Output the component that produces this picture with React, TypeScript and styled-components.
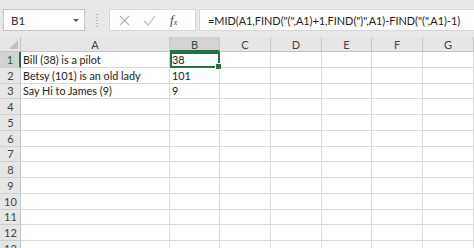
import { createGlobalStyle } from "styled-components";
import styled from "styled-components";

const GlobalStyle = createGlobalStyle`
  html, body {
    margin: 0;
    padding: 0;
    width: 474px;
    height: 248px;
    overflow: hidden;
    background: #ffffff;
  }
  body {
    font-family: Lato, "Open Sans", "Liberation Sans", sans-serif;
  }
`;

const Window = styled.div`
  width: 474px;
  height: 248px;
  overflow: hidden;
  background: #e8e8e8;
`;

const FormulaBar = styled.div`
  height: 37px;
  padding: 9px 0 0 3px;
  box-sizing: border-box;
  display: flex;
  align-items: flex-start;
`;

const NameBox = styled.div`
  width: 82px;
  height: 22px;
  box-sizing: border-box;
  background: #fff;
  border: 1px solid #c6c6c6;
  display: flex;
  align-items: center;
  justify-content: space-between;
  padding: 0 5px 0 7px;
  font-size: 11.5px;
  color: #333;
`;

const Caret = styled.span`
  width: 0;
  height: 0;
  border-left: 3px solid transparent;
  border-right: 3px solid transparent;
  border-top: 3px solid #555;
  margin-top: 1px;
`;

const Grip = styled.div`
  width: 2px;
  height: 14px;
  margin: 4px 11px 0 11px;
  background-image: radial-gradient(circle, #b8b8b8 0.8px, transparent 1px);
  background-size: 2px 3px;
`;

const ButtonBox = styled.div`
  width: 87px;
  height: 22px;
  box-sizing: border-box;
  background: #fff;
  border: 1px solid #d6d6d6;
  display: flex;
  align-items: center;
  padding-left: 9px;
  gap: 13px;
`;

const Fx = styled.span`
  font-family: "Liberation Serif", serif;
  font-style: italic;
  font-size: 13px;
  color: #444;
  margin-left: 1px;
  sub {
    font-size: 8px;
    vertical-align: -1px;
  }
`;

const FormulaInput = styled.div`
  flex: 1;
  height: 22px;
  margin-left: 3px;
  box-sizing: border-box;
  background: #fff;
  border: 1px solid #d6d6d6;
  border-right: none;
  display: flex;
  align-items: center;
  padding-left: 8px;
  font-size: 10.9px;
  color: #222;
  white-space: nowrap;
  overflow: hidden;
`;

const Sheet = styled.div`
  display: grid;
  grid-template-columns: 21px 149px 50px 51px 51px 50px 51px 51px;
  grid-template-rows: 15px repeat(13, 15.75px);
  background: #fff;
`;

const Corner = styled.div`
  background: #e6e6e6;
  border-right: 1px solid #c4c4c4;
  border-bottom: 1px solid #c4c4c4;
  box-sizing: border-box;
  position: relative;
  &::after {
    content: "";
    position: absolute;
    right: 2px;
    bottom: 2px;
    width: 0;
    height: 0;
    border-left: 9px solid transparent;
    border-bottom: 9px solid #c2c2c2;
  }
`;

const ColHeader = styled.div<{ $active?: boolean }>`
  background: ${({ $active }) => ($active ? "#d3d3d3" : "#e6e6e6")};
  border-right: 1px solid #c8c8c8;
  border-bottom: ${({ $active }) => ($active ? "2px solid #217346" : "1px solid #c4c4c4")};
  box-sizing: border-box;
  display: flex;
  align-items: center;
  justify-content: center;
  font-size: 11px;
  color: ${({ $active }) => ($active ? "#1e5a38" : "#444")};
  padding-top: ${({ $active }) => ($active ? "1px" : "0")};
`;

const RowHeader = styled.div<{ $active?: boolean }>`
  background: ${({ $active }) => ($active ? "#d3d3d3" : "#e6e6e6")};
  border-right: ${({ $active }) => ($active ? "2px solid #217346" : "1px solid #c4c4c4")};
  border-bottom: 1px solid #d0d0d0;
  box-sizing: border-box;
  display: flex;
  align-items: center;
  justify-content: center;
  font-size: 11px;
  color: ${({ $active }) => ($active ? "#1e5a38" : "#444")};
  padding-left: 1px;
`;

const Cell = styled.div<{ $selected?: boolean }>`
  border-right: 1px solid #dadada;
  border-bottom: 1px solid #dadada;
  box-sizing: border-box;
  display: flex;
  align-items: center;
  padding-left: 2px;
  font-size: 10.8px;
  color: #222;
  white-space: nowrap;
  overflow: visible;
  position: relative;
  ${({ $selected }) =>
    $selected &&
    `
    outline: 2px solid #217346;
    outline-offset: -2px;
    z-index: 1;
    &::after {
      content: "";
      position: absolute;
      right: -3px;
      bottom: -3px;
      width: 5px;
      height: 5px;
      background: #217346;
      border: 1px solid #fff;
    }
  `}
`;

const columns = ["A", "B", "C", "D", "E", "F", "G"];
const data: Record<number, string[]> = {
  1: ["Bill (38) is a pilot", "38"],
  2: ["Betsy (101) is an old lady", "101"],
  3: ["Say Hi to James (9)", "9"],
};

const CrossIcon = () => (
  <svg width="11" height="11" viewBox="0 0 11 11">
    <path d="M1 1 L10 10 M10 1 L1 10" stroke="#b5b5b5" strokeWidth="1.1" />
  </svg>
);

const CheckIcon = () => (
  <svg width="13" height="11" viewBox="0 0 13 11">
    <path d="M1 6 L5 10 L12 1" stroke="#b5b5b5" strokeWidth="1.1" fill="none" />
  </svg>
);

export default function App() {
  const rows = Array.from({ length: 13 }, (_, i) => i + 1);
  return (
    <Window>
      <GlobalStyle />
      <FormulaBar>
        <NameBox>
          B1
          <Caret />
        </NameBox>
        <Grip />
        <ButtonBox>
          <CrossIcon />
          <CheckIcon />
          <Fx>
            f<sub>x</sub>
          </Fx>
        </ButtonBox>
        <FormulaInput>
          =MID(A1,FIND("(",A1)+1,FIND(")",A1)-FIND("(",A1)-1)
        </FormulaInput>
      </FormulaBar>
      <Sheet>
        <Corner />
        {columns.map((c) => (
          <ColHeader key={c} $active={c === "B"}>
            {c}
          </ColHeader>
        ))}
        {rows.map((r) => (
          <>
            <RowHeader key={`h${r}`} $active={r === 1}>
              {r}
            </RowHeader>
            {columns.map((c, ci) => (
              <Cell key={`${c}${r}`} $selected={r === 1 && c === "B"}>
                {data[r]?.[ci] ?? ""}
              </Cell>
            ))}
          </>
        ))}
      </Sheet>
    </Window>
  );
}
